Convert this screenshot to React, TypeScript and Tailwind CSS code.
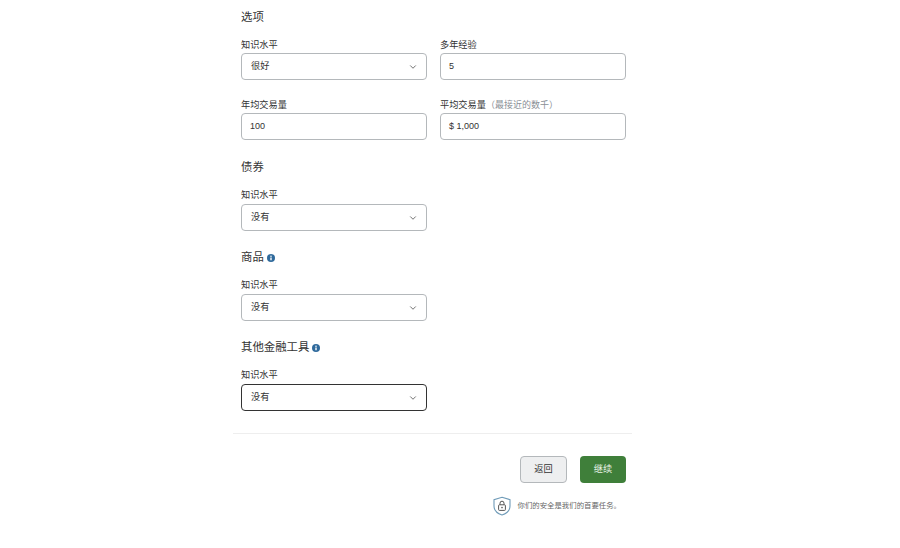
import { ChevronDown } from "lucide-react";

function Label({ children, tight }: { children: React.ReactNode; tight?: boolean }) {
    return (
        <div className={`h-[18px] text-[9.2px] leading-[18px] text-[#333] ${tight ? "" : "pt-[1px]"}`}>{children}</div>
    );
}

function SelectField({ label, value, focused, tight }: { label: string; value: string; focused?: boolean; tight?: boolean }) {
    return (
        <div className="w-[186px] shrink-0">
            <Label tight={tight}>{label}</Label>
            <div
                className={`flex h-[27px] items-center justify-between rounded-[4px] bg-white pl-[9px] pr-[8px] pt-[1px] text-[9.2px] text-[#333] ${
                    focused ? "border-[1.5px] border-[#333]" : "border border-[#b4b8bb]"
                }`}
            >
                <span>{value}</span>
                <ChevronDown className="h-[10px] w-[10px] text-[#555]" strokeWidth={2} />
            </div>
        </div>
    );
}

function InputField({ label, hint, value }: { label: string; hint?: string; value: string }) {
    return (
        <div className="w-[186px] shrink-0">
            <Label>
                {label}
                {hint && <span className="text-[9px] text-[#8a8f96]">{hint}</span>}
            </Label>
            <div className="flex h-[27px] items-center rounded-[4px] border border-[#b4b8bb] bg-white pl-[8px] pt-[1px] text-[9px] text-[#333]">
                {value}
            </div>
        </div>
    );
}

function InfoDot() {
    return (
        <svg className="ml-[3px] mt-[1px] h-[8px] w-[8px]" viewBox="0 0 16 16">
            <circle cx="8" cy="8" r="8" fill="#2f6a9c" />
            <rect x="6.6" y="7" width="2.8" height="5.5" fill="#fff" />
            <rect x="6.6" y="3.3" width="2.8" height="2.4" fill="#fff" />
        </svg>
    );
}

function Heading({ children, info }: { children: React.ReactNode; info?: boolean }) {
    return (
        <div className="flex h-[20px] items-center text-[11.4px] leading-[20px] text-[#333]">
            {children}
            {info && <InfoDot />}
        </div>
    );
}

function ShieldLock() {
    return (
        <svg className="h-[20px] w-[20px]" viewBox="0 0 20 20" fill="none">
            <path d="M10 1.2 L18 3.6 V10 C18 14.6 14.4 17.6 10 19 C5.6 17.6 2 14.6 2 10 V3.6 Z" stroke="#6f9bb8" strokeWidth="1.1" />
            <rect x="6.6" y="8.8" width="6.8" height="5.6" rx="0.8" stroke="#555" strokeWidth="1" />
            <path d="M8 8.8 V7.2 a2 2 0 0 1 4 0 V8.8" stroke="#555" strokeWidth="1" />
            <circle cx="10" cy="11.6" r="0.8" fill="#555" />
        </svg>
    );
}

export default function App() {
    return (
        <div className="h-[548px] w-[900px] overflow-hidden bg-white">
            <div className="ml-[233px] w-[399px] pt-[7px] font-['Liberation_Sans','Noto_Sans_CJK_SC',sans-serif]">
                <div className="pl-[8px]">
                    <Heading>选项</Heading>
                    <div className="mt-[8px] flex gap-[13px]">
                        <SelectField label="知识水平" value="很好" />
                        <InputField label="多年经验" value="5" />
                    </div>
                    <div className="mt-[15px] flex gap-[13px]">
                        <InputField label="年均交易量" value="100" />
                        <InputField label="平均交易量" hint="（最接近的数千）" value="$ 1,000" />
                    </div>

                    <div className="mt-[17px]">
                        <Heading>债券</Heading>
                    </div>
                    <div className="mt-[9px]">
                        <SelectField label="知识水平" value="没有" tight />
                    </div>

                    <div className="mt-[16px]">
                        <Heading info>商品</Heading>
                    </div>
                    <div className="mt-[9px]">
                        <SelectField label="知识水平" value="没有" tight />
                    </div>

                    <div className="mt-[16px]">
                        <Heading info>其他金融工具</Heading>
                    </div>
                    <div className="mt-[9px]">
                        <SelectField label="知识水平" value="没有" focused tight />
                    </div>
                </div>

                <div className="mt-[22px] border-t border-[#eeeeee]" />

                <div className="mt-[22px] flex justify-end gap-[13px] pr-[6px]">
                    <button className="h-[27px] w-[47px] rounded-[4px] border border-[#b4b8bb] bg-[#eeeff0] text-[9.2px] text-[#333]">
                        返回
                    </button>
                    <button className="h-[27px] w-[46px] rounded-[4px] bg-[#3f7f3a] text-[9.2px] text-[#e8f2e6]">
                        继续
                    </button>
                </div>

                <div className="mt-[13px] flex items-center justify-end pr-[11px]">
                    <ShieldLock />
                    <span className="ml-[6px] text-[7.4px] text-[#666]">你们的安全是我们的首要任务。</span>
                </div>
            </div>
        </div>
    );
}
